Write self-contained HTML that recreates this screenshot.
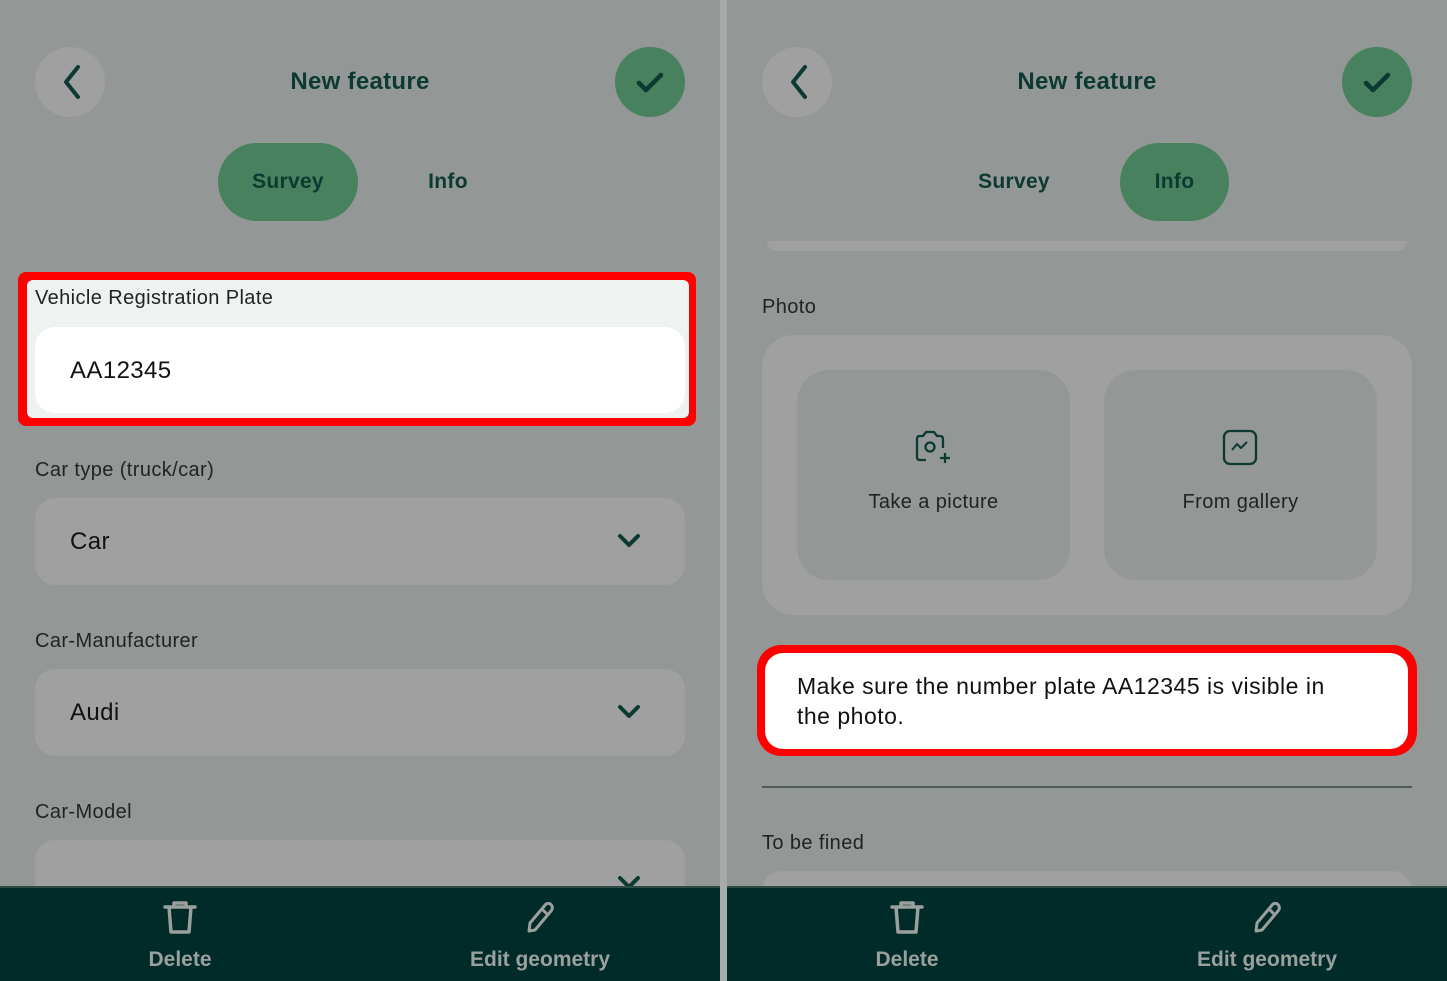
<!DOCTYPE html>
<html><head><meta charset="utf-8"><style>
*{box-sizing:border-box;margin:0;padding:0}
body{width:1447px;height:981px;background:#a8aaa9;font-family:"Liberation Sans",sans-serif;position:relative;overflow:hidden}
.p{position:absolute;top:0;width:720px;height:981px;background:#939795;overflow:hidden}
.a{position:absolute}
.t{color:#0c3a32;font-weight:bold;letter-spacing:0.3px}
.lbl{position:absolute;font-size:20px;color:#1d2422;letter-spacing:0.4px}
.field{position:absolute;left:35px;width:650px;height:87px;background:#a0a0a0;border-radius:20px}
.field span{position:absolute;left:35px;top:30px;font-size:24px;color:#111;letter-spacing:0.4px}
.bar{position:absolute;left:0;top:886px;width:720px;height:95px;background:#012b28;border-top:2px solid #2c4a46}
.bar div{position:absolute;color:#9aa09d;font-weight:bold;font-size:21px;text-align:center}
</style></head><body>
<!-- LEFT -->
<div class="p" style="left:0">
<div class="a" style="left:35px;top:47px;width:70px;height:70px;border-radius:50%;background:#a0a0a0"></div>
<svg class="a" style="left:35px;top:47px" width="70" height="70"><path d="M43 20 L31 35 L43 50" stroke="#0c3a32" stroke-width="4" fill="none" stroke-linecap="round" stroke-linejoin="round"/></svg>
<div class="a t" style="left:0;width:720px;text-align:center;top:68px;font-size:24px">New feature</div>
<div class="a" style="left:615px;top:47px;width:70px;height:70px;border-radius:50%;background:#47815e"></div>
<svg class="a" style="left:615px;top:47px" width="70" height="70"><path d="M24 36 L31 43 L46 28" stroke="#0c3a32" stroke-width="4.5" fill="none" stroke-linecap="round" stroke-linejoin="round"/></svg>
<div class="a" style="left:218px;top:143px;width:140px;height:78px;border-radius:39px;background:#47815e"></div>
<div class="a t" style="left:218px;width:140px;text-align:center;top:170px;font-size:21px">Survey</div>
<div class="a t" style="left:398px;width:100px;text-align:center;top:170px;font-size:21px">Info</div>
<div class="a" style="left:18px;top:272px;width:678px;height:154px;background:#ff0000;border-radius:8px"></div>
<div class="a" style="left:27px;top:280px;width:662px;height:138px;background:#eef3f1;border-radius:6px"></div>
<div class="lbl" style="left:35px;top:287px">Vehicle Registration Plate</div>
<div class="a" style="left:35px;top:327px;width:650px;height:86px;background:#fff;border-radius:20px"><span style="position:absolute;left:35px;top:30px;font-size:24px;color:#111;letter-spacing:0.4px">AA12345</span></div>
<div class="lbl" style="left:35px;top:459px">Car type (truck/car)</div>
<div class="field" style="top:498px"><span>Car</span></div>
<div class="lbl" style="left:35px;top:630px">Car-Manufacturer</div>
<div class="field" style="top:669px"><span>Audi</span></div>
<div class="lbl" style="left:35px;top:801px">Car-Model</div>
<div class="field" style="top:840px"></div>
<svg class="a" style="left:615px;top:530px" width="30" height="360"><path d="M5 6 L14 15 L23 6" stroke="#0c3a32" stroke-width="4" fill="none" stroke-linecap="round" stroke-linejoin="round"/><path d="M5 177 L14 186 L23 177" stroke="#0c3a32" stroke-width="4" fill="none" stroke-linecap="round" stroke-linejoin="round"/><path d="M5 348 L14 357 L23 348" stroke="#0c3a32" stroke-width="4" fill="none" stroke-linecap="round" stroke-linejoin="round"/></svg>
<div class="bar">
<svg class="a" style="left:160px;top:10px" width="40" height="40"><path d="M5 9 H35 M14 9 V5 H26 V9 M9 9 L11 34 H29 L31 9" stroke="#9aa09d" stroke-width="3.5" fill="none" stroke-linejoin="round" stroke-linecap="round"/></svg>
<div style="left:130px;width:100px;top:60px">Delete</div>
<svg class="a" style="left:520px;top:10px" width="40" height="40"><path d="M9 33 L10 25 L26 6 Q30 4 32 8 Q33 11 31 13 L15 32 Z M22 11 L28 17" stroke="#9aa09d" stroke-width="3" fill="none" stroke-linejoin="round"/></svg>
<div style="left:440px;width:200px;top:60px">Edit geometry</div>
</div>
</div>
<!-- RIGHT -->
<div class="p" style="left:727px">
<div class="a" style="left:35px;top:47px;width:70px;height:70px;border-radius:50%;background:#a0a0a0"></div>
<svg class="a" style="left:35px;top:47px" width="70" height="70"><path d="M43 20 L31 35 L43 50" stroke="#0c3a32" stroke-width="4" fill="none" stroke-linecap="round" stroke-linejoin="round"/></svg>
<div class="a t" style="left:0;width:720px;text-align:center;top:68px;font-size:24px">New feature</div>
<div class="a" style="left:615px;top:47px;width:70px;height:70px;border-radius:50%;background:#47815e"></div>
<svg class="a" style="left:615px;top:47px" width="70" height="70"><path d="M24 36 L31 43 L46 28" stroke="#0c3a32" stroke-width="4.5" fill="none" stroke-linecap="round" stroke-linejoin="round"/></svg>
<div class="a t" style="left:237px;width:100px;text-align:center;top:170px;font-size:21px">Survey</div>
<div class="a" style="left:393px;top:143px;width:109px;height:78px;border-radius:39px;background:#47815e"></div>
<div class="a t" style="left:393px;width:109px;text-align:center;top:170px;font-size:21px">Info</div>
<div class="a" style="left:40px;top:241px;width:640px;height:10px;background:#a0a0a0;border-radius:0 0 12px 12px"></div>
<div class="lbl" style="left:35px;top:296px">Photo</div>
<div class="a" style="left:35px;top:335px;width:650px;height:280px;background:#a0a0a0;border-radius:32px"></div>
<div class="a" style="left:70px;top:370px;width:273px;height:210px;background:#939795;border-radius:32px"></div>
<div class="a" style="left:377px;top:370px;width:273px;height:210px;background:#939795;border-radius:32px"></div>
<svg class="a" style="left:186px;top:428px" width="40" height="40"><path d="M13 32 H7 Q4 32 4 29 V11 Q4 8 7 8 H10 L13 4 H21 L24 8 H27 Q30 8 30 11 V20" stroke="#0c3a32" stroke-width="2.3" fill="none" stroke-linejoin="round"/><circle cx="17" cy="19" r="4.5" stroke="#0c3a32" stroke-width="2.3" fill="none"/><path d="M32 25 V35 M27 30 H37" stroke="#0c3a32" stroke-width="2.3"/></svg>
<div class="a" style="left:70px;width:273px;text-align:center;top:491px;font-size:20px;color:#1d2422;letter-spacing:0.4px">Take a picture</div>
<svg class="a" style="left:494px;top:428px" width="40" height="40"><rect x="3" y="3" width="32" height="33" rx="6" stroke="#0c3a32" stroke-width="2.3" fill="none"/><path d="M11 22 L16 16 L20 20 L26 14" stroke="#0c3a32" stroke-width="2" fill="none" stroke-linejoin="round"/></svg>
<div class="a" style="left:377px;width:273px;text-align:center;top:491px;font-size:20px;color:#1d2422;letter-spacing:0.4px">From gallery</div>
<div class="a" style="left:30px;top:645px;width:660px;height:111px;background:#ff0000;border-radius:24px"></div>
<div class="a" style="left:38px;top:653px;width:643px;height:96px;background:#fff;border-radius:18px"></div>
<div class="a" style="left:70px;top:671px;width:550px;font-size:23px;line-height:30px;color:#111;letter-spacing:0.5px">Make sure the number plate AA12345 is visible in the photo.</div>
<div class="a" style="left:35px;top:786px;width:650px;height:2px;background:#4d5c58"></div>
<div class="lbl" style="left:35px;top:832px">To be fined</div>
<div class="field" style="top:871px"></div>
<div class="bar">
<svg class="a" style="left:160px;top:10px" width="40" height="40"><path d="M5 9 H35 M14 9 V5 H26 V9 M9 9 L11 34 H29 L31 9" stroke="#9aa09d" stroke-width="3.5" fill="none" stroke-linejoin="round" stroke-linecap="round"/></svg>
<div style="left:130px;width:100px;top:60px">Delete</div>
<svg class="a" style="left:520px;top:10px" width="40" height="40"><path d="M9 33 L10 25 L26 6 Q30 4 32 8 Q33 11 31 13 L15 32 Z M22 11 L28 17" stroke="#9aa09d" stroke-width="3" fill="none" stroke-linejoin="round"/></svg>
<div style="left:440px;width:200px;top:60px">Edit geometry</div>
</div>
</div>
</body></html>
